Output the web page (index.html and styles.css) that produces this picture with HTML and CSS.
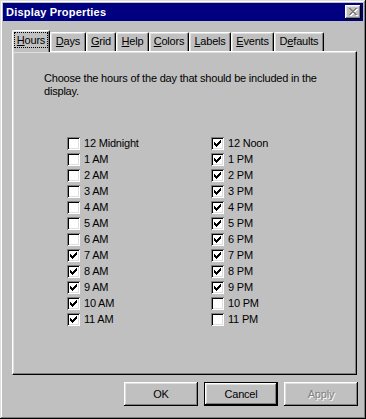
FILE: index.html
```html
<!DOCTYPE html>
<html>
<head>
<meta charset="utf-8">
<link rel="stylesheet" href="styles.css">
</head>
<body>
<div class="window">
  <div class="titlebar">
    <span class="title">Display Properties</span>
    <span class="close">
      <svg width="10" height="9" viewBox="0 0 10 9" shape-rendering="crispEdges">
        <path fill="#fff" d="M1 1h2v1h1v1h2v-1h1v-1h2v1h-1v1h-1v1h-1v1h1v1h1v1h1v1h-2v-1h-1v-1h-2v1h-1v1h-2v-1h1v-1h1v-1h1v-1h-1v-1h-1v-1h-1z"/>
        <path fill="#808080" d="M0 0h2v1h1v1h2v-1h1v-1h2v1h-1v1h-1v1h-1v1h1v1h1v1h1v1h-2v-1h-1v-1h-2v1h-1v1h-2v-1h1v-1h1v-1h1v-1h-1v-1h-1v-1h-1z"/>
      </svg>
    </span>
  </div>
  <div class="body">
    <div class="tabs">
      <div class="tab sel w-hours"><span class="focus"><u>H</u>ours</span></div>
      <div class="tab w-days"><u>D</u>ays</div>
      <div class="tab w-grid"><u>G</u>rid</div>
      <div class="tab w-help"><u>H</u>elp</div>
      <div class="tab w-colors"><u>C</u>olors</div>
      <div class="tab w-labels"><u>L</u>abels</div>
      <div class="tab w-events"><u>E</u>vents</div>
      <div class="tab w-defaults">D<u>e</u>faults</div>
    </div>
    <div class="panel">
      <p class="intro">Choose the hours of the day that should be included in the display.</p>
      <div class="cols">
        <ul class="col">
          <li><span class="cb"></span>12 Midnight</li>
          <li><span class="cb"></span>1 AM</li>
          <li><span class="cb"></span>2 AM</li>
          <li><span class="cb"></span>3 AM</li>
          <li><span class="cb"></span>4 AM</li>
          <li><span class="cb"></span>5 AM</li>
          <li><span class="cb"></span>6 AM</li>
          <li><span class="cb on"></span>7 AM</li>
          <li><span class="cb on"></span>8 AM</li>
          <li><span class="cb on"></span>9 AM</li>
          <li><span class="cb on"></span>10 AM</li>
          <li><span class="cb on"></span>11 AM</li>
        </ul>
        <ul class="col">
          <li><span class="cb on"></span>12 Noon</li>
          <li><span class="cb on"></span>1 PM</li>
          <li><span class="cb on"></span>2 PM</li>
          <li><span class="cb on"></span>3 PM</li>
          <li><span class="cb on"></span>4 PM</li>
          <li><span class="cb on"></span>5 PM</li>
          <li><span class="cb on"></span>6 PM</li>
          <li><span class="cb on"></span>7 PM</li>
          <li><span class="cb on"></span>8 PM</li>
          <li><span class="cb on"></span>9 PM</li>
          <li><span class="cb"></span>10 PM</li>
          <li><span class="cb"></span>11 PM</li>
        </ul>
      </div>
    </div>
    <div class="buttons">
      <span class="btn">OK</span>
      <span class="btn default"><span class="inner">Cancel</span></span>
      <span class="btn disabled">Apply</span>
    </div>
  </div>
</div>
</body>
</html>
```
FILE: styles.css
```css
html, body {
  margin: 0;
  padding: 0;
  background: #c0c0c0;
}
body {
  font-family: "Liberation Sans", Arial, sans-serif;
  font-size: 11px;
  color: #000;
  letter-spacing: -0.2px;
}
.window {
  width: 366px;
  height: 419px;
  box-sizing: border-box;
  padding: 3px;
  background: #c0c0c0;
  box-shadow: inset -1px -1px #000, inset 1px 1px #dfdfdf, inset -2px -2px #808080, inset 2px 2px #fff;
}
.titlebar {
  height: 18px;
  background: #000080;
  display: flex;
  align-items: center;
  justify-content: space-between;
  padding: 0 2px 0 3px;
}
.title {
  color: #fff;
  font-weight: bold;
  font-size: 11px;
  letter-spacing: 0.2px;
}
.close {
  width: 16px;
  height: 14px;
  box-sizing: border-box;
  background: #c0c0c0;
  box-shadow: inset -1px -1px #000, inset 1px 1px #fff, inset -2px -2px #808080, inset 2px 2px #dfdfdf;
  display: flex;
  align-items: center;
  justify-content: center;
  padding-left: 1px;
}
.close svg { display: block; }
.body {
  padding: 9px 0 0 9px;
}
.tabs {
  display: flex;
  align-items: flex-end;
  height: 21px;
}
.tab {
  height: 19px;
  box-sizing: border-box;
  border-top: 1px solid #fff;
  border-left: 1px solid #fff;
  border-right: 1px solid #000;
  border-radius: 2px 2px 0 0;
  box-shadow: inset -1px 0 #808080, inset 1px 1px #dfdfdf;
  display: flex;
  align-items: center;
  justify-content: center;
  padding-bottom: 2px;
}
.tab.sel {
  height: 22px;
  margin-bottom: -1px;
  position: relative;
  z-index: 1;
  background: #c0c0c0;
  padding-bottom: 4px;
}
.focus {
  outline: 1px dotted #000;
  outline-offset: 1px;
  padding: 0 1px;
}
.w-hours { width: 38px; }
.w-days { width: 36px; }
.w-grid { width: 30px; }
.w-help { width: 33px; }
.w-colors { width: 40px; }
.w-labels { width: 42px; }
.w-events { width: 43px; }
.w-defaults { width: 50px; }
.panel {
  width: 345px;
  height: 324px;
  box-sizing: border-box;
  border-top: 1px solid #fff;
  border-left: 1px solid #fff;
  border-right: 1px solid #000;
  border-bottom: 1px solid #000;
  box-shadow: inset -1px -1px #808080, inset 1px 1px #dfdfdf;
  padding: 20px 0 0 31px;
}
.intro {
  margin: 0;
  width: 285px;
  line-height: 13px;
}
.cols {
  display: flex;
  margin-top: 37px;
  padding-left: 23px;
}
.col {
  list-style: none;
  margin: 0;
  padding: 0;
  width: 144px;
}
.col li {
  height: 16px;
  display: flex;
  align-items: center;
}
.cb {
  width: 13px;
  height: 13px;
  box-sizing: border-box;
  background: #fff;
  box-shadow: inset 1px 1px #808080, inset -1px -1px #fff, inset 2px 2px #000, inset -2px -2px #dfdfdf;
  margin-right: 4px;
  flex: none;
  position: relative;
}
.cb.on::after {
  content: "";
  position: absolute;
  left: 3px;
  top: 3px;
  width: 7px;
  height: 7px;
  background: url("data:image/svg+xml;utf8,<svg xmlns='http://www.w3.org/2000/svg' width='7' height='7' viewBox='0 0 7 7' shape-rendering='crispEdges'><path fill='black' d='M6 0h1v3h-1v1h-1v1h-1v1h-1v1h-1v-1h-1v-1h-1v-3h1v1h1v1h1v-1h1v-1h1v-1h1z'/></svg>") no-repeat;
}
.buttons {
  width: 346px;
  display: flex;
  justify-content: flex-end;
  gap: 6px;
  margin-top: 7px;
}
.btn {
  width: 74px;
  height: 24px;
  box-sizing: border-box;
  display: flex;
  align-items: center;
  justify-content: center;
  background: #c0c0c0;
  box-shadow: inset -1px -1px #000, inset 1px 1px #fff, inset -2px -2px #808080, inset 2px 2px #dfdfdf;
}
.btn.default {
  border: 1px solid #000;
  box-shadow: none;
}
.btn.default .inner {
  width: 100%;
  height: 100%;
  display: flex;
  align-items: center;
  justify-content: center;
  box-shadow: inset -1px -1px #000, inset 1px 1px #fff, inset -2px -2px #808080, inset 2px 2px #dfdfdf;
}
.btn.disabled {
  color: #808080;
  text-shadow: 1px 1px #fff;
}
```
